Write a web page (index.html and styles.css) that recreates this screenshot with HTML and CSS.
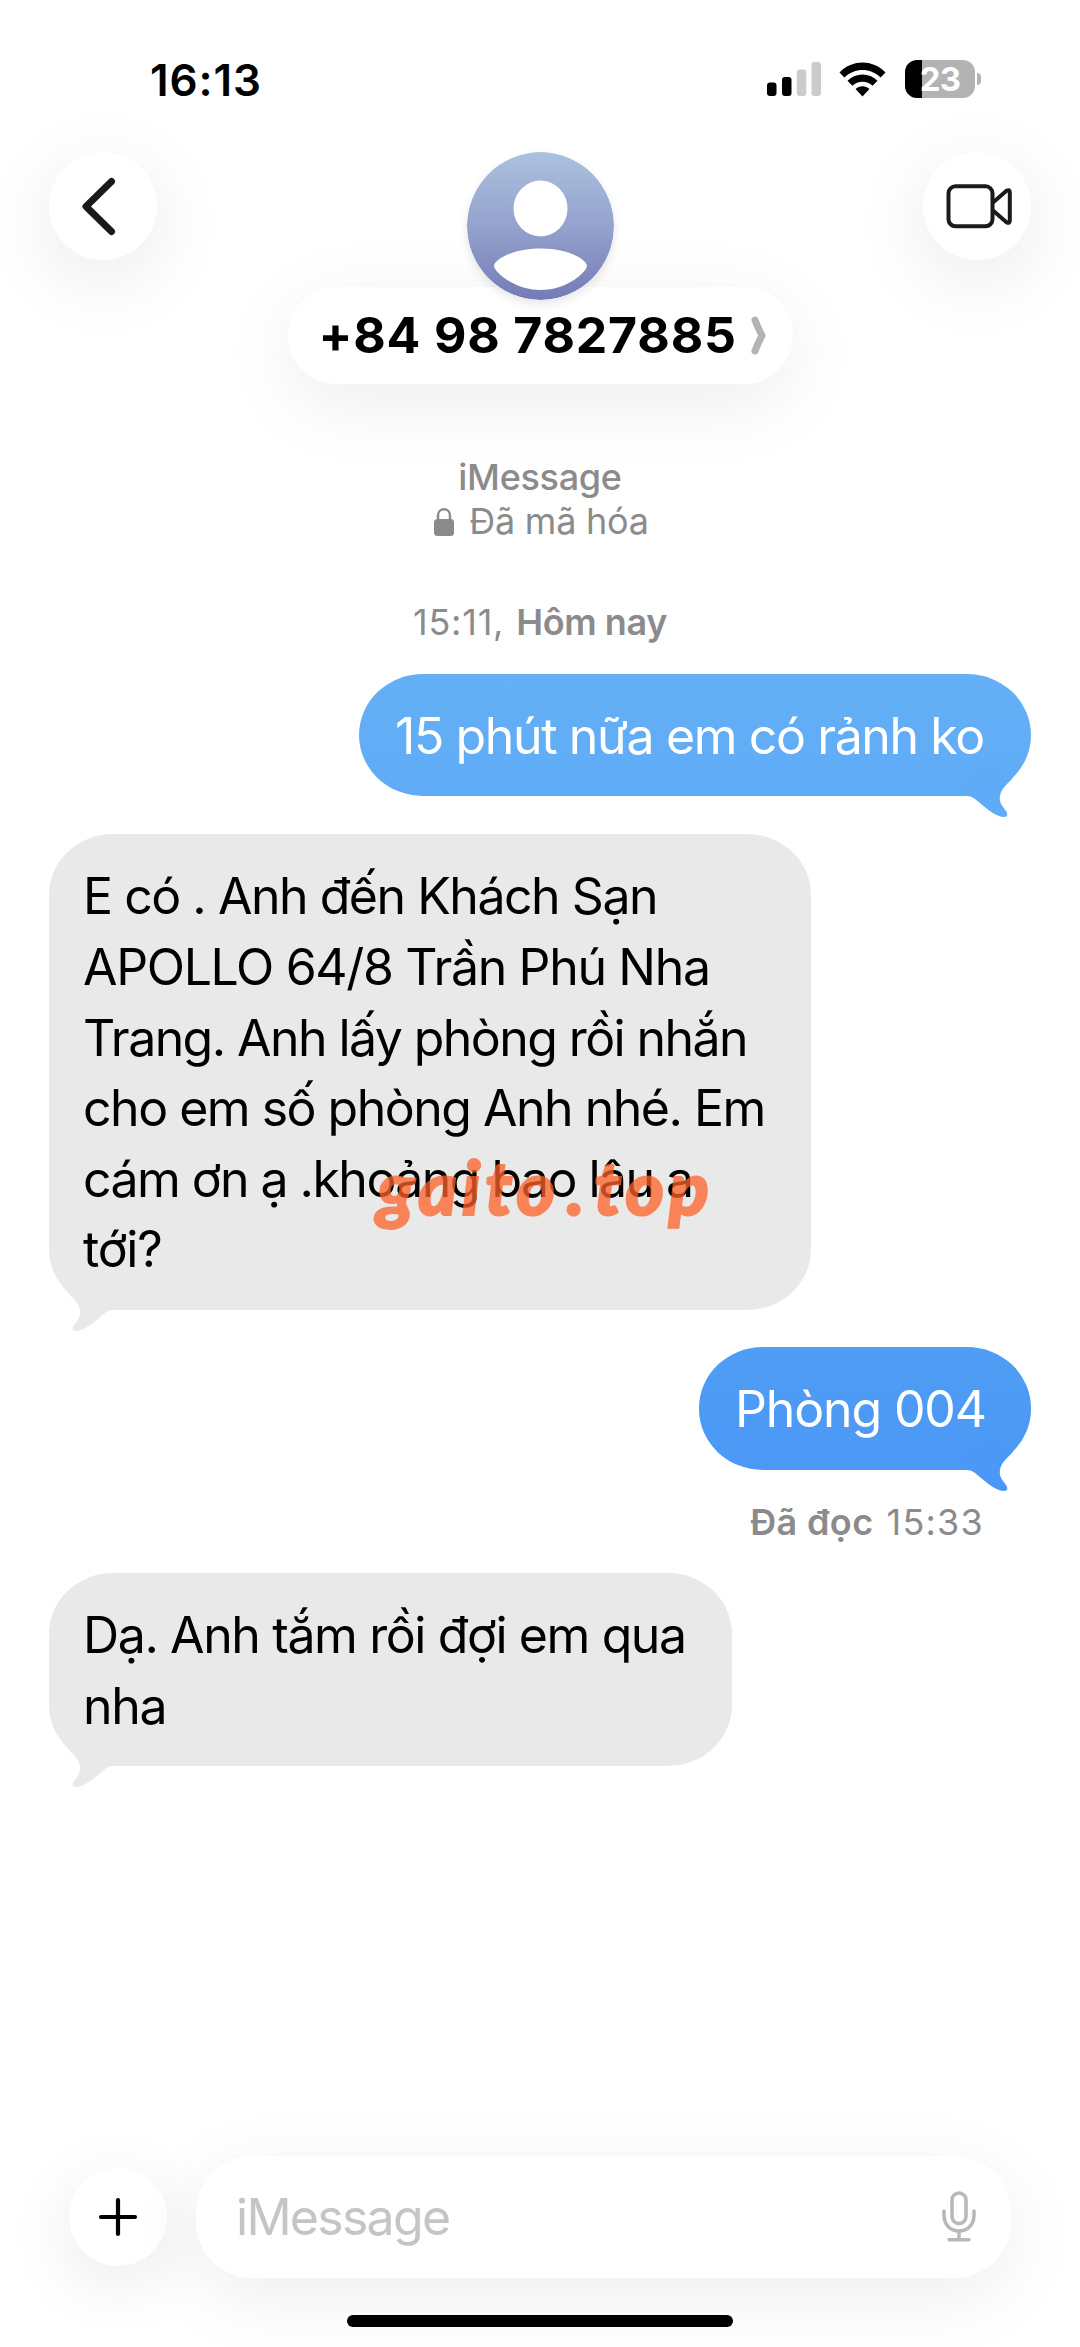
FILE: index.html
```html
<!DOCTYPE html>
<html lang="vi">
<head>
  <meta charset="utf-8">
  <title>Tin nhắn</title>
  <link rel="stylesheet" href="styles.css">
</head>
<body>
  <div class="phone">
    <div class="status">
      <span class="time">16:13</span>
      <div class="indicators">
        <svg class="signal" width="54" height="34" viewBox="0 0 54 34">
          <rect x="0" y="20.5" width="9.5" height="13.5" rx="3"/>
          <rect x="15" y="15" width="9.5" height="19" rx="3"/>
          <rect class="off" x="29.8" y="7.5" width="9.5" height="26.5" rx="3"/>
          <rect class="off" x="44.5" y="0" width="9.5" height="34" rx="3"/>
        </svg>
        <svg class="wifi" width="47" height="35" viewBox="0 0 47 35">
          <path d="M.5 10.4C13.5-2.8 33.500-2.8 46.500 10.400L41.600 15.400C31.500 5.400 15.500 5.400 5.400 15.400Z"/>
          <path d="M8.500 18.700C17 10.300 30 10.300 38.500 18.700L33.600 23.800C28 18.400 19 18.400 13.400 23.800Z"/>
          <path d="M16.600 27C20.500 23.300 26.500 23.300 30.400 27L23.500 34.400Z"/>
        </svg>
        <div class="battery"><span class="level">23</span></div>
        <span class="nub"></span>
      </div>
    </div>

    <header class="header">
      <button class="round" aria-label="Quay lại">
        <svg width="108" height="108" viewBox="0 0 108 108"><path class="back" d="M62.500 29.500L37 54.400L62.500 79.500"/></svg>
      </button>
      <div class="contact">
        <svg class="avatar" width="147" height="148" viewBox="0 0 147 148">
          <defs><linearGradient id="sky" x1="0" y1="0" x2="0" y2="1"><stop offset="0" stop-color="#abc1de"/><stop offset=".55" stop-color="#929fcb"/><stop offset="1" stop-color="#747ab7"/></linearGradient></defs>
          <ellipse cx="73.500" cy="74" rx="73.500" ry="74" fill="url(#sky)"/>
          <ellipse cx="73.500" cy="56.500" rx="27" ry="28" fill="#fff"/>
          <path d="M27 114C27 108 45 96.500 73.500 96.500S120 108 120 114C120 119 101 138 73.500 138S27 119 27 114Z" fill="#fff"/>
        </svg>
        <div class="name">
          <span class="number">+84 98 7827885</span>
          <svg class="more" width="15" height="39" viewBox="0 0 15 39"><path d="M4 4Q7 12 11 19.500Q7 27 4 35"/></svg>
        </div>
      </div>
      <button class="round" aria-label="Gọi video">
        <svg width="108" height="108" viewBox="0 0 108 108">
          <g class="video"><rect x="25.500" y="34.300" width="44" height="40" rx="7"/><path d="M70 50.500L83.500 38.800Q86.800 37 86.800 40.500V68.500Q86.800 72 83.500 70.200L70 58.500"/></g>
        </svg>
      </button>
    </header>

    <main class="thread">
      <div class="meta service">iMessage</div>
      <div class="meta lockrow">
        <svg width="20" height="29" viewBox="0 0 20 29"><rect x="0" y="12" width="20" height="17" rx="3.500" fill="#8b8b8d"/><path d="M4 13V8.500C4 .200 16 .200 16 8.500V13" fill="none" stroke="#8b8b8d" stroke-width="2.500"/></svg>
        <span>Đã mã hóa</span>
      </div>
      <div class="meta stamp"><span class="clock">15:11,</span><b>Hôm nay</b></div>

      <div class="bubble out first">
        <span class="line l1">15 phút nữa em có rảnh ko</span>
        <svg class="tail" width="70" height="60" viewBox="0 0 70 60"><path fill="#60abf7" d="M0 39H4C11 39 13 42 19 47C26 53 35 60 42 60C46 60 46 57 44 54C39 48 37 44 38 39C39 32 44 28 50 22L30 5L0 20Z"/></svg>
      </div>

      <div class="bubble in long">
        <span class="line l2">E có . Anh đến Khách Sạn</span>
        <span class="line l3">APOLLO 64/8 Trần Phú Nha</span>
        <span class="line l4">Trang. Anh lấy phòng rồi nhắn</span>
        <span class="line l5">cho em số phòng Anh nhé. Em</span>
        <span class="line l6">cám ơn ạ .khoảng bao lâu a</span>
        <span class="line l7">tới?</span>
        <svg class="tail" width="70" height="60" viewBox="0 0 70 60"><path fill="#e9e9e9" d="M0 39H4C11 39 13 42 19 47C26 53 35 60 42 60C46 60 46 57 44 54C39 48 37 44 38 39C39 32 44 28 50 22L30 5L0 20Z"/></svg>
        <div class="mark"><span>gaito</span><span class="dot">.</span><span class="top">top</span></div>
      </div>

      <div class="bubble out second">
        <span class="line l8">Phòng 004</span>
        <svg class="tail" width="70" height="60" viewBox="0 0 70 60"><path fill="#4c98f6" d="M0 39H4C11 39 13 42 19 47C26 53 35 60 42 60C46 60 46 57 44 54C39 48 37 44 38 39C39 32 44 28 50 22L30 5L0 20Z"/></svg>
      </div>
      <div class="meta read"><b>Đã đọc</b><span>15:33</span></div>

      <div class="bubble in last">
        <span class="line l9">Dạ. Anh tắm rồi đợi em qua</span>
        <span class="line l10">nha</span>
        <svg class="tail" width="70" height="60" viewBox="0 0 70 60"><path fill="#e9e9e9" d="M0 39H4C11 39 13 42 19 47C26 53 35 60 42 60C46 60 46 57 44 54C39 48 37 44 38 39C39 32 44 28 50 22L30 5L0 20Z"/></svg>
      </div>
    </main>

    <footer class="composer">
      <button class="plus" aria-label="Thêm">
        <svg width="98" height="98" viewBox="0 0 98 98"><path d="M32 49H66M49 32V66"/></svg>
      </button>
      <div class="field">
        <span class="hint">iMessage</span>
        <svg class="mic" width="34" height="52" viewBox="0 0 34 52"><rect x="10" y="2" width="14" height="30.500" rx="7"/><path d="M2 20V24C2 34 8.500 40 17 40S32 34 32 24V20M17 40V48.500M7 48.800H27"/></svg>
      </div>
    </footer>
    <div class="home"></div>
  </div>
</body>
</html>
```
FILE: styles.css
```css
* { box-sizing: border-box; }

body {
  margin: 0;
  background: #fff;
  color: #000;
  font-family: Inter, "Noto Sans", sans-serif;
}

svg { display: block; flex: none; }

.phone {
  display: flex;
  flex-direction: column;
  width: 1080px;
  height: 2347px;
  overflow: hidden;
  background: #fff;
}

/* Status bar */
.status {
  display: flex;
  justify-content: space-between;
  align-items: center;
  height: 152px;
  padding: 8px 99px 0 150px;
}

.time { font-size: 44px; font-weight: 600; letter-spacing: 0.9px; }

.indicators { display: flex; align-items: center; margin-top: -2px; }
.signal { fill: #000; }
.signal .off { fill: #cbcbcb; }
.wifi { margin-left: 18px; }

.battery {
  display: flex;
  justify-content: center;
  align-items: center;
  width: 70px;
  height: 38px;
  margin-left: 19px;
  border-radius: 12px;
  background: linear-gradient(to right, #000 16.5px, #b3b3b3 16.5px);
}

.level { color: #fff; font-size: 33px; font-weight: 700; letter-spacing: -0.8px; line-height: 38px; }
.nub { width: 4px; height: 12px; margin-left: 2px; border-radius: 0 5px 5px 0; background: #b3b3b3; }

/* Header */
.header {
  position: relative;
  display: flex;
  justify-content: space-between;
  align-items: flex-start;
  height: 233px;
  padding: 0 49px;
}

button { padding: 0; border: 0; background: #fff; }

.round {
  width: 108px;
  height: 108px;
  border-radius: 50%;
  box-shadow: 0 18px 80px rgba(0, 0, 0, 0.09);
}

.back { fill: none; stroke: #1a1a1a; stroke-width: 7; stroke-linecap: round; stroke-linejoin: round; }
.video { fill: none; stroke: #1a1a1a; stroke-width: 4; stroke-linejoin: round; }

.contact { display: flex; flex-direction: column; align-items: center; }
.avatar { position: relative; z-index: 1; border-radius: 50%; box-shadow: 0 4px 10px rgba(0, 0, 0, 0.1); }

.name {
  display: flex;
  align-items: center;
  width: 505px;
  height: 97px;
  margin-top: -13px;
  padding-left: 31px;
  border-radius: 49px;
  background: #fff;
  box-shadow: 0 18px 80px rgba(0, 0, 0, 0.075);
}

.number { margin-top: -2px; font-size: 50px; font-weight: 700; letter-spacing: 0.82px; line-height: 60px; white-space: nowrap; }
.more { margin-left: 14px; fill: none; stroke: #b3b3b3; stroke-width: 7; stroke-linecap: round; stroke-linejoin: round; }

/* Conversation */
.thread {
  position: relative;
  display: flex;
  flex: 1;
  flex-direction: column;
  align-items: flex-start;
  padding: 71px 49px 0;
}

.meta {
  display: flex;
  align-self: center;
  color: #8b8b8d;
  font-size: 36px;
  line-height: 43.6px;
  white-space: nowrap;
}

.meta b { font-weight: 600; }
.service { font-weight: 500; letter-spacing: -0.3px; }
.lockrow { gap: 15px; align-items: center; letter-spacing: -0.25px; margin-left: 3px; }
.stamp { margin: 58px 0 29px; gap: 12px; }
.stamp .clock { letter-spacing: 0.76px; }
.stamp b { letter-spacing: -0.4px; }

.bubble {
  position: relative;
  padding: 27px 36px 25px;
  border-radius: 64px / 61px;
  font-size: 50px;
  line-height: 70.6px;
}

.line { display: block; white-space: nowrap; }

.out { align-self: flex-end; color: #fff; }
.in { background: #e9e9e9; }

.first { width: 672px; background: linear-gradient(#64b0f5, #60abf7); }
.long { width: 762px; margin-top: 38px; padding-left: 34px; }
.second { width: 332px; margin-top: 37px; background: linear-gradient(#4f9df4, #4c98f6); }
.last { width: 683px; margin-top: 29px; padding-left: 34px; }

.tail { position: absolute; bottom: -21px; }
.out .tail { right: -1px; }
.in .tail { left: -1px; transform: scaleX(-1); }

/* Tracking per line keeps each line at its measured width */
.l1 { letter-spacing: -1.39px; }
.l2 { letter-spacing: -1.47px; }
.l3 { letter-spacing: -1.34px; }
.l4 { letter-spacing: -1.57px; }
.l5 { letter-spacing: -1.5px; }
.l6 { letter-spacing: -1.55px; }
.l7 { letter-spacing: -1.2px; }
.l8 { letter-spacing: -1.14px; }
.l9 { letter-spacing: -1.39px; }
.l10 { letter-spacing: -1.3px; }

.mark {
  position: absolute;
  left: 328px;
  top: 308px;
  display: flex;
  color: #ff6228;
  font: italic 900 74px/90px Lato, sans-serif;
  letter-spacing: 4.6px;
  opacity: 0.75;
  -webkit-text-stroke: 2px #ff6228;
}

.mark .dot { margin-left: 7px; }
.mark .top { margin-left: 5px; }

.read { align-self: flex-end; gap: 13px; margin: 31px 47px 0 0; }
.read b { letter-spacing: 0.38px; }
.read span { letter-spacing: 1.22px; }

/* Message composer */
.composer { display: flex; align-items: center; gap: 29px; height: 122px; padding: 0 69px; }

.plus { width: 98px; height: 98px; border-radius: 50%; box-shadow: 0 16px 70px rgba(0, 0, 0, 0.09); }
.plus path { stroke: #000; stroke-width: 4.2; stroke-linecap: round; }

.field {
  display: flex;
  align-items: center;
  justify-content: space-between;
  width: 815px;
  height: 122px;
  padding: 0 35px 0 40px;
  border-radius: 56px;
  background: #fff;
  box-shadow: 0 18px 80px rgba(0, 0, 0, 0.07);
}

.hint { color: #c5c5c7; font-size: 50px; letter-spacing: -1.72px; }
.mic { fill: none; stroke: #b8b8bb; stroke-width: 3.5; stroke-linecap: round; }

.home { position: relative; align-self: center; width: 386px; height: 12px; margin: 37px 0 20px; border-radius: 6px; background: #000; }
```
